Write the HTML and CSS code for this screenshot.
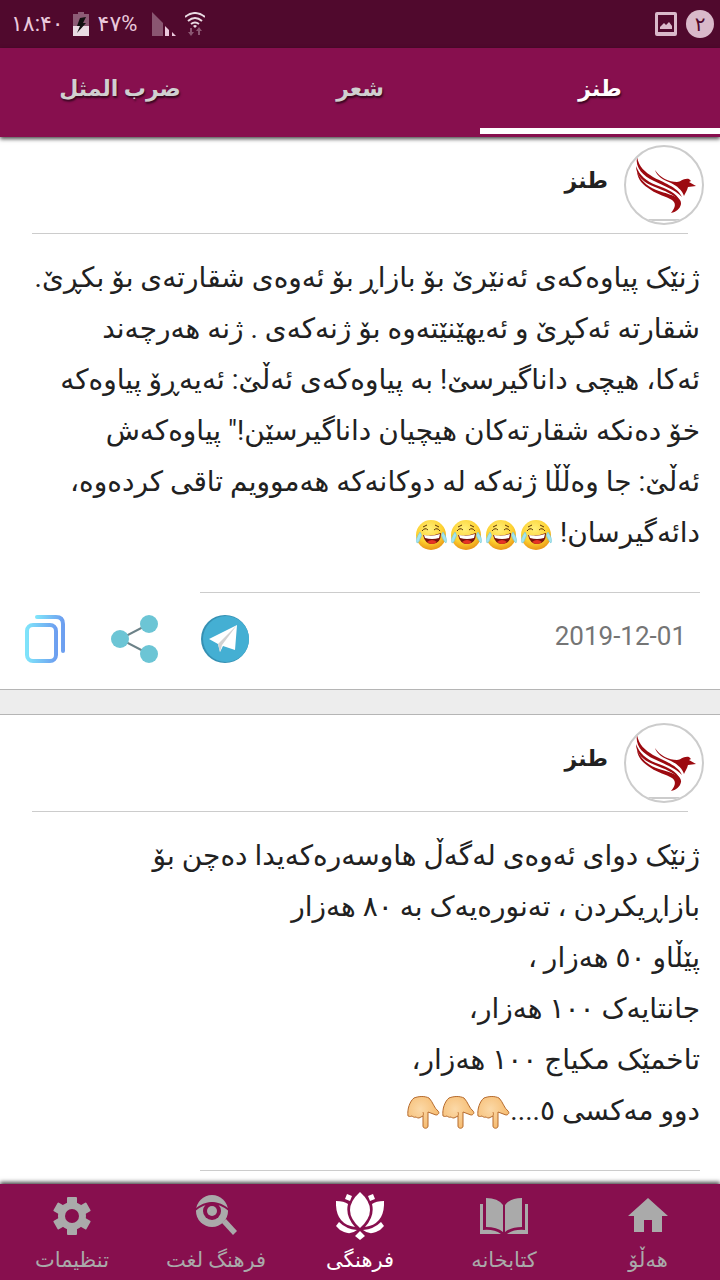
FILE: index.html
```html
<!DOCTYPE html>
<html lang="ckb" dir="rtl">
<head>
    <meta charset="UTF-8">
    <meta name="viewport" content="width=device-width, initial-scale=1.0">
    <title>فرهنگی</title>
    <link rel="stylesheet" href="styles.css">
</head>
<body>

<!-- shared drawings -->
<svg class="defs" aria-hidden="true">
    <defs>
        <linearGradient id="copyBlue" x1="0" y1="0" x2="1" y2="0">
            <stop offset="0" stop-color="#7fe3fa"/>
            <stop offset="1" stop-color="#6d9ff0"/>
        </linearGradient>
        <radialGradient id="faceYellow" cx="0.45" cy="0.3" r="0.75">
            <stop offset="0" stop-color="#fff07a"/>
            <stop offset="0.6" stop-color="#fdd02f"/>
            <stop offset="1" stop-color="#e58a12"/>
        </radialGradient>
        <radialGradient id="skin" cx="0.4" cy="0.4" r="0.7">
            <stop offset="0" stop-color="#fbd9a8"/>
            <stop offset="1" stop-color="#f5b768"/>
        </radialGradient>
    </defs>
    <symbol id="bird" viewBox="0 0 76 76">
        <g fill="#9c0a10">
            <path d="M11 10C13 20 19 25 27 30C36 35 52 40 56 50C48 42 38 39 28 34C17 29 9 21 11 10Z"/>
            <path d="M10 19C14 29 20 34 30 38C41 42 51 46 54 54C47 47 39 44 29 40C18 36 10 29 10 19Z"/>
            <path d="M11 25C16 36 24 41 33 44C45 48 56 50 55 57C54 62 50 65 45 66C50 60 50 56 46 53C40 49 32 48 25 43C17 38 12 33 11 25Z"/>
            <path d="M29 23C34 31 43 35 51 35C55 35 57 31 63 32L65 34L63 35L70 39L62 40C61 44 59 46 58 49C56 43 51 39 45 36C37 33 31 29 29 23Z"/>
        </g>
        <path d="M16 73H60" stroke="#ccc" stroke-width="2"/>
    </symbol>
    <symbol id="joy" viewBox="0 0 34 34">
        <circle cx="17" cy="17" r="15" fill="url(#faceYellow)"/>
        <path d="M9 9L13 7M8 13Q11 9 14 12M21 7L25 9M20 12Q23 9 26 13" fill="none" stroke="#5d3308" stroke-width="1"/>
        <path d="M9 17Q17 19 27 15Q27 26 18 26Q11 26 9 17Z" fill="#77120c"/>
        <path d="M10 17Q18 19 26 16L25 20Q18 22 11 20Z" fill="#fff"/>
        <path d="M13 24Q18 20 23 24Q18 28 13 24Z" fill="#e53325"/>
        <path d="M6 14Q9 17 6 21Q5 25 3 25Q1 21 6 14ZM29 14Q26 17 29 21Q31 25 32 25Q34 21 29 14Z" fill="#a5e4ee" stroke="#67c3d2" stroke-width="0.5"/>
    </symbol>
    <symbol id="down" viewBox="0 0 34 34">
        <path d="M2 20C1 13 4 5 8 2C13 0 19 0 23 2C27 6 28 12 32 15C34 17 32 19 30 19L22 16V30C22 33 17 33 17 30V20L13 22C11 22 10 21 10 21C8 22 6 20 6 20C4 21 2 20 2 20Z" fill="url(#skin)" stroke="#b56a2d" stroke-width="1"/>
        <path d="M17 20Q18 18 17 16" fill="none" stroke="#c98242" stroke-width="1"/>
    </symbol>
    <symbol id="copy" viewBox="0 0 40 48">
        <g fill="none" stroke="url(#copyBlue)" stroke-width="4" stroke-linecap="round">
            <rect x="2" y="10" width="29" height="36" rx="6"/>
            <path d="M12 2H31Q38 2 38 9V36"/>
        </g>
    </symbol>
    <symbol id="share" viewBox="0 0 48 48">
        <path d="M38 9L9 24L38 39" fill="none" stroke="#6c8288" stroke-width="2"/>
        <g fill="#6cc5d5">
            <circle cx="38" cy="9" r="9"/>
            <circle cx="9" cy="24" r="9"/>
            <circle cx="38" cy="39" r="9"/>
        </g>
    </symbol>
    <symbol id="telegram" viewBox="0 0 48 48">
        <circle cx="24" cy="24" r="24" fill="#3590b3"/>
        <circle cx="25" cy="24" r="23" fill="#44afd3"/>
        <path d="M8 24L36 10L34 35L22 31L19 37L17 29Z" fill="#fff"/>
        <path d="M36 10L17 29L19 37L21 30Z" fill="#d2d2d2"/>
    </symbol>
</svg>

<div class="app">
    <div class="status-bar" dir="ltr">
        <div class="status-group">
            <span class="status-text">۱۸:۴۰</span>
            <svg class="status-battery" viewBox="0 0 16 24" aria-hidden="true">
                <path d="M5 0H11V2H16V14H0V2H5Z" fill="#8d5c76"/>
                <path d="M0 14H16V24H0Z" fill="#eadbe3"/>
                <path d="M7 6L13 5L10 11H13L4 21L7 14H4Z" fill="#111"/>
            </svg>
            <span class="status-text">۴۷%</span>
            <svg class="status-signal" viewBox="0 0 24 24" aria-hidden="true">
                <path d="M0 0L11 11V24H0Z" fill="#8a5671"/>
                <path d="M13 14L17 18V24H13ZM20 20L24 24H20Z" fill="#eac9dc"/>
            </svg>
            <svg class="status-wifi" viewBox="0 0 20 24" aria-hidden="true">
                <g fill="none" stroke="#eadbe3" stroke-width="2">
                    <path d="M0 5Q10 -3 20 5M3 9Q10 3 17 9M6 12Q10 9 14 12"/>
                </g>
                <path d="M8 14Q10 12 12 14L10 16Z" fill="#eadbe3"/>
                <path d="M5 16H7V20H9L6 24L3 20H5ZM13 23H15V19H17L14 15L11 19H13Z" fill="#8a5671"/>
            </svg>
        </div>
        <div class="status-group">
            <svg class="status-picture" viewBox="0 0 22 24" aria-hidden="true">
                <path d="M2 0H20Q22 0 22 2V22Q22 24 20 24H2Q0 24 0 22V2Q0 0 2 0ZM3 3V20H19V3Z" fill="#d9b9ca" fill-rule="evenodd"/>
                <path d="M5 17V15L9 11L11 13L14 10L17 14V17Z" fill="#d9b9ca"/>
            </svg>
            <span class="status-count">۲</span>
        </div>
    </div>

    <nav class="tabs">
        <button class="tab active" type="button">طنز</button>
        <button class="tab" type="button">شعر</button>
        <button class="tab" type="button">ضرب المثل</button>
    </nav>

    <main class="feed">
        <article class="card">
            <header class="card-header">
                <svg class="avatar" aria-hidden="true"><use href="#bird"/></svg>
                <h2>طنز</h2>
            </header>
            <p class="card-text">
                ژنێک پیاوەکەی ئەنێرێ بۆ بازاڕ بۆ ئەوەی شقارتەی بۆ بکڕێ.<br>
                شقارتە ئەکڕێ و ئەیهێنێتەوە بۆ ژنەکەی . ژنە هەرچەند<br>
                ئەکا، هیچی داناگیرسێ! بە پیاوەکەی ئەڵێ: ئەیەڕۆ پیاوەکە<br>
                خۆ دەنکە شقارتەکان هیچیان داناگیرسێن!" پیاوەکەش<br>
                ئەڵێ: جا وەڵڵا ژنەکە لە دوکانەکە هەموویم تاقی کردەوە،<br>
                دائەگیرسان!
                <span class="emojis"><svg><use href="#joy"/></svg><svg><use href="#joy"/></svg><svg><use href="#joy"/></svg><svg><use href="#joy"/></svg></span>
            </p>
            <footer class="card-footer">
                <time datetime="2019-12-01">2019-12-01</time>
                <div class="actions">
                    <button type="button" aria-label="Telegram"><svg><use href="#telegram"/></svg></button>
                    <button type="button" aria-label="Share"><svg><use href="#share"/></svg></button>
                    <button type="button" aria-label="Copy"><svg><use href="#copy"/></svg></button>
                </div>
            </footer>
        </article>

        <article class="card">
            <header class="card-header">
                <svg class="avatar" aria-hidden="true"><use href="#bird"/></svg>
                <h2>طنز</h2>
            </header>
            <p class="card-text">
                ژنێک دوای ئەوەی لەگەڵ هاوسەرەکەیدا دەچن بۆ<br>
                بازاڕیکردن ، تەنورەیەک بە ٨٠ هەزار<br>
                پێڵاو ٥٠ هەزار ،<br>
                جانتایەک ١٠٠ هەزار،<br>
                تاخمێک مکیاج ١٠٠ هەزار،<br>
                دوو مەکسی ٥....<span class="emojis"><svg><use href="#down"/></svg><svg><use href="#down"/></svg><svg><use href="#down"/></svg></span>
            </p>
            <footer class="card-footer"></footer>
        </article>
    </main>

    <nav class="bottom-nav">
        <a href="#home">
            <svg viewBox="0 0 48 48" aria-hidden="true"><path d="M24 6L4 24H10V40H20V28H28V40H38V24H44Z"/></svg>
            <span>هەڵۆ</span>
        </a>
        <a href="#library">
            <svg viewBox="0 0 48 48" aria-hidden="true">
                <path d="M6 6Q18 6 23 13V40Q17 35 6 35ZM42 6Q30 6 25 13V40Q31 35 42 35Z"/>
                <path d="M0 12H3V38Q14 37 21 42H0ZM48 12H45V38Q34 37 27 42H48Z"/>
            </svg>
            <span>کتابخانە</span>
        </a>
        <a class="active" href="#culture">
            <svg viewBox="0 0 48 48" aria-hidden="true">
                <path d="M24 0Q44 18 24 36Q4 18 24 0Z"/>
                <path d="M0 9Q8 9 12 12Q9 24 19 35Q-1 32 0 9ZM48 9Q40 9 36 12Q39 24 29 35Q49 32 48 9Z"/>
                <path d="M3 30Q10 37 21 38Q15 43 8 40Q3 38 0 34ZM45 30Q38 37 27 38Q33 43 40 40Q45 38 48 34ZM24 39L29 44L24 48L19 44ZM11 2L16 4L14 9L9 7ZM37 2L32 4L34 9L39 7Z"/>
            </svg>
            <span>فرهنگی</span>
        </a>
        <a href="#dictionary">
            <svg viewBox="0 0 48 48" aria-hidden="true">
                <path d="M30 31L34 27L45 39L41 43Z"/>
                <circle cx="20" cy="19" r="16"/>
                <path class="cut-line" d="M3 18Q20 4 37 18"/>
                <circle class="cut" cx="20" cy="19" r="9"/>
                <circle cx="20" cy="19" r="5"/>
            </svg>
            <span>فرهنگ لغت</span>
        </a>
        <a href="#settings">
            <svg viewBox="0 0 48 48" aria-hidden="true">
                <circle cx="24" cy="24" r="14"/>
                <rect x="19" y="5" width="10" height="38" rx="1"/>
                <rect x="19" y="5" width="10" height="38" rx="1" transform="rotate(60 24 24)"/>
                <rect x="19" y="5" width="10" height="38" rx="1" transform="rotate(120 24 24)"/>
                <circle class="cut" cx="24" cy="24" r="7"/>
            </svg>
            <span>تنظیمات</span>
        </a>
    </nav>
</div>

</body>
</html>
```
FILE: styles.css
```css
* {
    box-sizing: border-box;
}
body {
    margin: 0;
    font-family: Roboto, "DejaVu Sans", sans-serif;
    background-color: #ededed;
    color: #212121;
}
button {
    border: none;
    background: none;
    padding: 0;
    font-family: inherit;
    cursor: pointer;
}
.defs {
    position: absolute;
    width: 0;
    height: 0;
}
.app {
    display: flex;
    flex-direction: column;
    height: 100vh;
}

/* status bar */
.status-bar {
    display: flex;
    justify-content: space-between;
    align-items: center;
    height: 48px;
    padding: 0 6px 0 11px;
    background-color: #50092d;
    color: #eac9dc;
}
.status-group {
    display: flex;
    align-items: center;
    gap: 9px;
}
.status-text {
    font-size: 22px;
    line-height: 32px;
}
.status-battery {
    width: 16px;
    height: 24px;
}
.status-signal {
    width: 24px;
    height: 24px;
    margin-left: 6px;
}
.status-wifi {
    width: 20px;
    height: 24px;
}
.status-picture {
    width: 22px;
    height: 24px;
}
.status-count {
    width: 28px;
    height: 28px;
    border-radius: 50%;
    background-color: #d9b9ca;
    color: #50092d;
    font-size: 20px;
    line-height: 28px;
    text-align: center;
}

/* tabs */
.tabs {
    display: flex;
    position: relative;
    z-index: 1;
    height: 89px;
    padding-bottom: 3px;
    background-color: #870f4e;
    box-shadow: 0 2px 4px rgba(0, 0, 0, 0.7);
}
.tab {
    flex: 1;
    border-bottom: 6px solid transparent;
    color: #d0d0d0;
    font-size: 22px;
    font-weight: bold;
    text-shadow: 1px 2px 2px rgba(0, 0, 0, 0.6);
}
.tab.active {
    border-bottom-color: #fff;
    color: #fff;
}

/* posts */
.feed {
    flex: 1;
    min-height: 0;
    overflow-y: auto;
    scrollbar-width: none;
}
.card {
    margin-bottom: 24px;
    border-bottom: 1px solid #b5b5b5;
    background-color: #fff;
}
.card + .card {
    border-top: 1px solid #b5b5b5;
}
.card-header {
    display: flex;
    gap: 16px;
    height: 97px;
    margin: 0 32px;
    padding-top: 8px;
    border-bottom: 1px solid #ccc;
}
.avatar {
    width: 80px;
    height: 80px;
    margin-right: -16px;
    border: 2px solid #ccc;
    border-radius: 50%;
}
.card-header h2 {
    margin: 0;
    font-size: 22px;
    line-height: 72px;
}
.card-text {
    margin: 0;
    padding: 18px 20px 34px;
    font-size: 28px;
    line-height: 51px;
    white-space: nowrap;
}
.emojis {
    display: inline-flex;
    gap: 1px;
    vertical-align: middle;
}
.emojis svg {
    width: 34px;
    height: 34px;
}
.card-footer {
    display: flex;
    justify-content: space-between;
    align-items: flex-start;
    height: 97px;
    margin-right: 20px;
    padding: 23px 14px 0 21px;
    background: linear-gradient(#ccc, #ccc) right top / calc(100% - 200px) 1px no-repeat;
}
.card-footer time {
    color: #757575;
    font-size: 26px;
    line-height: 42px;
}
.actions {
    display: flex;
    gap: 42px;
}
.actions svg {
    display: block;
    width: 48px;
    height: 48px;
}

/* bottom navigation */
.bottom-nav {
    display: flex;
    position: relative;
    height: 96px;
    background-color: #870f4e;
    box-shadow: 0 -2px 4px rgba(0, 0, 0, 0.7);
}
.bottom-nav a {
    display: flex;
    flex: 1;
    flex-direction: column;
    align-items: center;
    padding-top: 8px;
    color: #aaa;
    font-size: 21px;
    line-height: 40px;
    text-decoration: none;
}
.bottom-nav a.active {
    color: #fff;
}
.bottom-nav svg {
    width: 48px;
    height: 48px;
    fill: currentColor;
}
.bottom-nav .cut {
    fill: #870f4e;
}
.bottom-nav .cut-line {
    fill: none;
    stroke: #870f4e;
    stroke-width: 2;
}
```
